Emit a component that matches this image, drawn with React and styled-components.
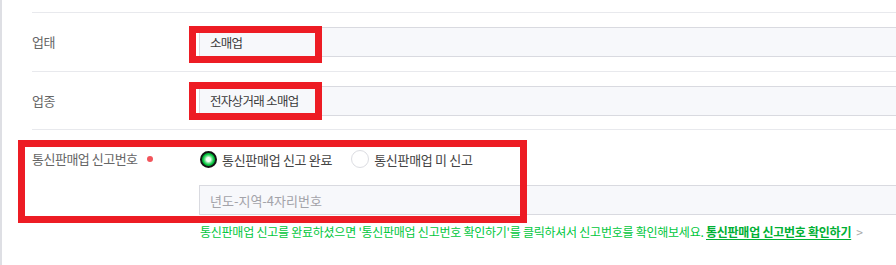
import React from 'react'
import styled, { createGlobalStyle } from 'styled-components'

const GlobalStyle = createGlobalStyle`
  html, body {
    margin: 0;
    padding: 0;
    background: #fff;
    font-family: "Noto Sans CJK KR", "Noto Sans", sans-serif;
  }
`

const Frame = styled.div`
  height: 265px;
  box-sizing: border-box;
  padding: 12px 0 0 30px;
  border-left: 2px solid #dedfe4;
  overflow: hidden;
`

const Row = styled.div`
  position: relative;
  display: flex;
  align-items: ${({ $top }) => ($top ? 'flex-start' : 'center')};
  height: ${({ $h }) => ($h ? `${$h}px` : 'auto')};
  box-sizing: border-box;
  border-top: 1px solid #e8e9ed;
`

const Label = styled.div`
  flex: 0 0 167px;
  display: flex;
  align-items: center;
  padding-top: ${({ $pt }) => $pt || 0}px;
  font-size: 13px;
  line-height: 20px;
  letter-spacing: -0.5px;
  color: #666;
`

const Required = styled.span`
  width: 6px;
  height: 6px;
  margin-left: 9px;
  border-radius: 50%;
  background: #f2545b;
`

const Field = styled.div`
  flex: 1;
  margin-right: -2px;
  padding-top: ${({ $pt }) => $pt || 0}px;
`

const Input = styled.div`
  height: 30px;
  box-sizing: border-box;
  padding-left: 10px;
  display: flex;
  align-items: center;
  border: 1px solid #d9dae0;
  background: #f7f8fb;
  font-size: ${({ $placeholder }) => ($placeholder ? 13 : 12.5)}px;
  letter-spacing: ${({ $placeholder }) => ($placeholder ? 0 : -0.7)}px;
  color: ${({ $placeholder }) => ($placeholder ? '#a3a3a9' : '#3a3a3a')};
`

const RadioGroup = styled.div`
  display: flex;
  align-items: center;
  height: 20px;
  gap: 19px;
`

const RadioItem = styled.label`
  display: flex;
  align-items: center;
  gap: 5px;
  font-size: 13px;
  letter-spacing: -0.3px;
  color: #444;
`

const RadioDot = styled.span`
  width: ${({ $on }) => ($on ? 17 : 18)}px;
  height: ${({ $on }) => ($on ? 17 : 18)}px;
  box-sizing: border-box;
  border-radius: 50%;
  margin-left: ${({ $on }) => ($on ? 1 : 0)}px;
  border: ${({ $on }) => ($on ? '2px solid #141414' : '1px solid #dcdde2')};
  background: ${({ $on }) => ($on
    ? 'radial-gradient(circle, #f4fff6 0 2px, #7fe398 3.5px, #00c23a 5.5px)'
    : '#fff')};
`

const Help = styled.p`
  margin: 9px 0 0 1px;
  font-size: 12px;
  line-height: 16px;
  letter-spacing: -0.25px;
  color: #00c73c;
  white-space: nowrap;

  a {
    color: #00b034;
    font-weight: 700;
    text-decoration: underline;
    text-underline-offset: 2px;
  }

  span {
    margin-left: 5px;
    color: #aaa;
  }
`

const Highlight = styled.div`
  position: absolute;
  top: ${({ $top }) => $top}px;
  left: ${({ $left }) => $left}px;
  width: ${({ $w }) => $w}px;
  height: ${({ $h }) => $h}px;
  box-sizing: border-box;
  border: 7px solid #ed1c24;
  pointer-events: none;
`

const App = () => (
  <>
    <GlobalStyle />
    <Frame>
      <Row $h={59}>
        <Label>업태</Label>
        <Field>
          <Input>소매업</Input>
        </Field>
        <Highlight $top={13} $left={157} $w={133} $h={37} />
      </Row>
      <Row $h={58}>
        <Label>업종</Label>
        <Field>
          <Input>전자상거래 소매업</Input>
        </Field>
        <Highlight $top={10} $left={157} $w={133} $h={38} />
      </Row>
      <Row $top>
        <Label $pt={19}>
          통신판매업 신고번호
          <Required />
        </Label>
        <Field $pt={19}>
          <RadioGroup>
            <RadioItem>
              <RadioDot $on />
              통신판매업 신고 완료
            </RadioItem>
            <RadioItem>
              <RadioDot />
              통신판매업 미 신고
            </RadioItem>
          </RadioGroup>
          <Input $placeholder style={{ marginTop: 16 }}>년도-지역-4자리번호</Input>
          <Help>
            통신판매업 신고를 완료하셨으면 '통신판매업 신고번호 확인하기'를 클릭하셔서 신고번호를 확인해보세요.{' '}
            <a href="#check">통신판매업 신고번호 확인하기</a>
            <span>&gt;</span>
          </Help>
        </Field>
        <Highlight $top={10} $left={-14} $w={509} $h={83} />
      </Row>
    </Frame>
  </>
)

export default App
